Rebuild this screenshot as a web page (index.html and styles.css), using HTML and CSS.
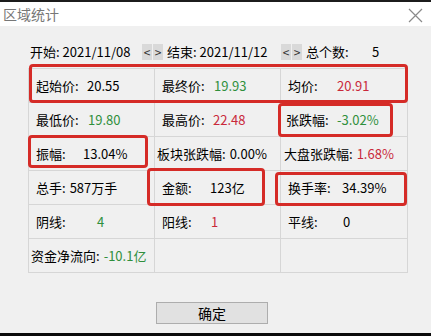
FILE: index.html
```html
<!DOCTYPE html>
<html lang="zh-CN">
<head>
  <meta charset="UTF-8" />
  <title>区域统计</title>
  <link rel="stylesheet" href="styles.css">
</head>
<body>
  <div class="topline"></div>

  <div class="titlebar">
    <span class="title">区域统计</span>
    <svg class="close" width="15" height="15" viewBox="0 0 15 15">
      <path d="M1 1 L14 14 M14 1 L1 14" stroke="#8a8a8a" stroke-width="1.2" fill="none" />
    </svg>
  </div>

  <div class="dialog">
    <div class="range">
      <span class="field start">开始: 2021/11/08</span>
      <span class="nav">&lt;</span><span class="nav">&gt;</span>
      <span class="field end">结束: 2021/11/12</span>
      <span class="nav">&lt;</span><span class="nav">&gt;</span>
      <span class="field total">总个数:</span>
      <span class="count">5</span>
    </div>

    <div class="grid">
      <div class="cell"><span class="label w51">起始价:</span><span>20.55</span></div>
      <div class="cell"><span class="label w52">最终价:</span><span class="up-g">19.93</span></div>
      <div class="cell"><span class="label w49">均价:</span><span class="dn-r">20.91</span></div>

      <div class="cell"><span class="label w52">最低价:</span><span class="up-g">19.80</span></div>
      <div class="cell"><span class="label w51">最高价:</span><span class="dn-r">22.48</span></div>
      <div class="cell tight"><span class="label w51">张跌幅:</span><span class="up-g">-3.02%</span></div>

      <div class="cell"><span class="label w47">振幅:</span><span>13.04%</span></div>
      <div class="cell wide"><span class="label free">板块张跌幅:</span><span>0.00%</span></div>
      <div class="cell mid"><span class="label free">大盘张跌幅:</span><span class="dn-r">1.68%</span></div>

      <div class="cell"><span class="label free">总手:</span><span>587万手</span></div>
      <div class="cell"><span class="label w48">金额:</span><span>123亿</span></div>
      <div class="cell"><span class="label w54">换手率:</span><span>34.39%</span></div>

      <div class="cell"><span class="label w61">阴线:</span><span class="up-g">4</span></div>
      <div class="cell"><span class="label w49">阳线:</span><span class="dn-r">1</span></div>
      <div class="cell"><span class="label w55">平线:</span><span>0</span></div>

      <div class="cell wide"><span class="label free">资金净流向:</span><span class="up-g">-10.1亿</span></div>
      <div class="cell"></div>
      <div class="cell"></div>

      <!-- red annotation frames -->
      <div class="mark m1"></div>
      <div class="mark m2"></div>
      <div class="mark m3"></div>
      <div class="mark m4"></div>
      <div class="mark m5"></div>
    </div>

    <button class="ok">确定</button>
  </div>

  <div class="bottomline"></div>
</body>
</html>
```

FILE: styles.css
```css
body {
  margin: 0;
  width: 431px;
  height: 336px;
  overflow: hidden;
  background-color: #f0f0f0;
  font-family: "Noto Sans CJK SC", "Liberation Sans", sans-serif;
  font-size: 13px;
  color: #000;
}

.topline {
  height: 2px;
  background-color: #1c1c1c;
}

.titlebar {
  height: 24px;
  background-color: #fff;
  display: flex;
  align-items: center;
  justify-content: space-between;
  padding: 0 8px 0 3px;
}

.title {
  font-size: 14px;
  color: #777;
}

.close {
  margin-top: 2px;
}

.dialog {
  height: 307px;
  box-sizing: border-box;
  padding-top: 18px;
}

/* date range line */
.range {
  display: flex;
  align-items: center;
  height: 16px;
  padding-left: 30px;
  line-height: 16px;
}

.field {
  white-space: nowrap;
}

.start {
  width: 112px;
}

.end {
  width: 114px;
  margin-left: 3px;
}

.total {
  margin-left: 3px;
  width: 66px;
}

.nav {
  width: 10px;
  height: 16px;
  margin-right: 1px;
  background-color: #d9d9d9;
  color: #333;
  font-size: 12px;
  text-align: center;
  line-height: 15px;
}

/* stats table */
.grid {
  position: relative;
  display: grid;
  grid-template-columns: 126px 126px 127px;
  grid-auto-rows: 34px;
  margin: 8px 0 0 28px;
  width: 379px;
  border-top: 1px solid #d6d6d6;
  border-left: 1px solid #d6d6d6;
  box-sizing: border-box;
}

.cell {
  display: flex;
  align-items: center;
  padding-left: 7px;
  border-right: 1px solid #d6d6d6;
  border-bottom: 1px solid #d6d6d6;
  white-space: nowrap;
}

.cell.wide {
  padding-left: 2px;
}

.cell.mid {
  padding-left: 3px;
}

.cell.tight {
  padding-left: 5px;
}

.label {
  display: inline-block;
}

.label.free {
  margin-right: 4px;
}

.w47 { width: 47px; }
.w48 { width: 48px; }
.w49 { width: 49px; }
.w51 { width: 51px; }
.w52 { width: 52px; }
.w54 { width: 54px; }
.w55 { width: 55px; }
.w61 { width: 61px; }

.up-g {
  color: #2f8f3c;
}

.dn-r {
  color: #c9283a;
}

.mark {
  position: absolute;
  border: 3px solid #d52b27;
  border-radius: 4px;
  box-sizing: border-box;
}

.m1 { left: 0; top: -5px; width: 379px; height: 39px; }
.m2 { left: 249px; top: 34px; width: 115px; height: 34px; }
.m3 { left: -1px; top: 66px; width: 120px; height: 33px; }
.m4 { left: 118px; top: 99px; width: 118px; height: 38px; }
.m5 { left: 246px; top: 103px; width: 132px; height: 34px; }

.ok {
  display: block;
  margin: 29px 0 0 156px;
  width: 112px;
  height: 22px;
  padding: 0;
  background-color: #e1e1e1;
  border: 1px solid #adadad;
  font-family: "Noto Sans CJK SC", sans-serif;
  font-size: 14px;
  color: #000;
  line-height: 18px;
}

.bottomline {
  height: 3px;
  background-color: #0a0a0a;
}
```
